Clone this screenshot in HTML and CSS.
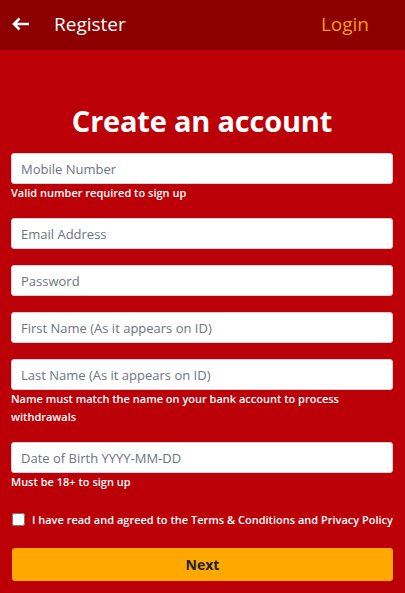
FILE: index.html
```html
<!DOCTYPE html>
<html lang="en">
<head>
<meta charset="utf-8">
<title>Register</title>
<link rel="stylesheet" href="styles.css">
</head>
<body>
<header class="topbar">
  <div class="topbar-left">
    <svg class="back-icon" width="18" height="14" viewBox="0 0 18 14" aria-hidden="true">
      <path d="M17 7H2.5M7.5 1.5L2 7l5.5 5.5" fill="none" stroke="#fff" stroke-width="2.6" stroke-linecap="butt" stroke-linejoin="miter"/>
    </svg>
    <span class="topbar-title">Register</span>
  </div>
  <a class="login-link">Login</a>
</header>
<main class="content">
  <h1 class="page-title">Create an account</h1>
  <form class="form">
    <div class="field">
      <input class="input" type="text" placeholder="Mobile Number">
      <p class="hint">Valid number required to sign up</p>
    </div>
    <div class="field">
      <input class="input" type="text" placeholder="Email Address">
    </div>
    <div class="field">
      <input class="input" type="password" placeholder="Password">
    </div>
    <div class="field">
      <input class="input" type="text" placeholder="First Name (As it appears on ID)">
    </div>
    <div class="field">
      <input class="input" type="text" placeholder="Last Name (As it appears on ID)">
      <p class="hint">Name must match the name on your bank account to process withdrawals</p>
    </div>
    <div class="field">
      <input class="input" type="text" placeholder="Date of Birth YYYY-MM-DD">
      <p class="hint">Must be 18+ to sign up</p>
    </div>
    <label class="agree">
      <input class="checkbox" type="checkbox">
      <span class="agree-text">I have read and agreed to the Terms &amp; Conditions and Privacy Policy</span>
    </label>
    <button class="next-btn" type="button">Next</button>
  </form>
</main>
</body>
</html>
```
FILE: styles.css
```css
* { box-sizing: border-box; }
html, body {
  margin: 0;
  padding: 0;
  height: 100%;
}
body {
  background: #bb0007;
  font-family: "Open Sans", "Noto Sans", sans-serif;
  color: #fff;
}
.topbar {
  height: 50px;
  background: #8c0000;
  display: flex;
  align-items: center;
  justify-content: space-between;
  padding: 0 36px 0 12px;
}
.topbar-left {
  display: flex;
  align-items: center;
  gap: 24px;
}
.back-icon { display: block; margin-top: -2px; }
.topbar-title {
  font-size: 19px;
  color: #fff;
  line-height: 1;
  margin-top: -2px;
}
.login-link {
  font-size: 19px;
  color: #f39c12;
  line-height: 1;
  margin-top: -2px;
}
.content {
  padding: 0 12px 0 11px;
}
.page-title {
  margin: 0;
  height: 103px;
  padding-top: 51px;
  text-align: center;
  font-size: 29px;
  font-weight: 700;
  line-height: 40px;
  letter-spacing: -0.2px;
}
.form {
  display: flex;
  flex-direction: column;
}
.field {
  margin-bottom: 16px;
}
.input {
  display: block;
  width: 100%;
  height: 31px;
  padding: 4px 9px;
  border: 1px solid #ced4da;
  border-radius: 3px;
  background: #fff;
  font-family: inherit;
  font-size: 13px;
  color: #495057;
  outline: none;
}
.input::placeholder { color: #6c757d; opacity: 1; }
.hint {
  margin: 0;
  font-size: 11px;
  font-weight: 600;
  line-height: 18px;
  letter-spacing: 0;
}
.agree {
  display: flex;
  align-items: center;
  gap: 7px;
  height: 24px;
  margin-bottom: 17px;
}
.checkbox {
  margin: 0 0 0 1px;
  width: 13px;
  height: 13px;
  flex: none;
}
.agree-text {
  font-size: 11px;
  font-weight: 600;
  letter-spacing: 0;
  white-space: nowrap;
}
.next-btn {
  height: 33px;
  margin-left: 1px;
  border: none;
  border-radius: 3px;
  background: #ffa800;
  color: #1c2135;
  font-family: inherit;
  font-size: 14px;
  font-weight: 700;
}
```
